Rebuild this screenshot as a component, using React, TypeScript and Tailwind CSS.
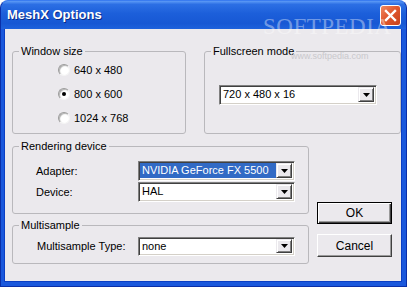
import React from 'react';

const FONT = "font-['Liberation_Sans',Arial,sans-serif]";

const DropArrow = () => (
  <div className="w-[16px] h-full flex items-center justify-center bg-[#ebe9ed] border border-t-[#ebe9ed] border-l-[#ebe9ed] border-r-[#404040] border-b-[#404040] shadow-[inset_1px_1px_0_#fff,inset_-1px_-1px_0_#808080]">
    <svg width="7" height="4" viewBox="0 0 7 4">
      <path d="M0 0h7L3.5 4z" fill="#000" />
    </svg>
  </div>
);

interface ComboProps {
  value: string;
  width: string;
  height: string;
  selected?: boolean;
}

const Combo: React.FC<ComboProps> = ({ value, width, height, selected }) => (
  <div
    className={`${width} ${height} flex bg-white border border-t-[#808080] border-l-[#808080] border-r-white border-b-white shadow-[inset_1px_1px_0_#404040,inset_-1px_-1px_0_#d4d0c8] p-[1px] pr-[2px] pb-[2px]`}
  >
    <div
      className={`flex-1 flex items-center pl-[2px] leading-none ${
        selected ? 'bg-[#316ac5] text-white' : 'text-black'
      }`}
    >
      {value}
    </div>
    <DropArrow />
  </div>
);

const Radio: React.FC<{ label: string; checked?: boolean }> = ({ label, checked }) => (
  <div className="h-[24px] flex items-center gap-[4px]">
    <span className="w-[12px] h-[12px] rounded-full bg-white border border-t-[#9a9a9a] border-l-[#9a9a9a] border-r-[#f4f4f4] border-b-[#f4f4f4] shadow-[inset_1px_1px_1px_#b0b0b0] flex items-center justify-center">
      {checked && <span className="w-[4px] h-[4px] rounded-full bg-black" />}
    </span>
    <span>{label}</span>
  </div>
);

const Group: React.FC<{ title: string; className: string; children?: React.ReactNode }> = ({
  title,
  className,
  children,
}) => (
  <div className={`relative border border-[#b9b8bc] rounded-[3px] ${className}`}>
    <span className="absolute -top-[7px] left-[6px] px-[2px] bg-[#ebe9ed] leading-[13px]">{title}</span>
    {children}
  </div>
);

export default function App() {
  return (
    <div className={`w-[407px] h-[287px] bg-white text-[11px] text-black ${FONT}`}>
      <div className="relative w-full h-full flex flex-col rounded-t-[8px] bg-[#1a58dc] border border-[#0a2fa8] border-t-[#3a7cf0] overflow-hidden">
        {/* title bar */}
        <div className="h-[28px] flex items-center justify-between pl-[6px] pr-[5px] bg-[linear-gradient(to_bottom,#5d9bf6_0%,#2c6fe4_12%,#1c5fda_45%,#1758d4_80%,#1e62dc_100%)]">
          <span className="text-white font-bold text-[13px] [text-shadow:1px_1px_0_#0b2a83]">MeshX Options</span>
          <div className="w-[21px] h-[21px] rounded-[3px] border border-white flex items-center justify-center bg-[linear-gradient(135deg,#f08a62_0%,#e0582f_45%,#c8421c_100%)]">
            <svg width="13" height="13" viewBox="0 0 13 13">
              <path d="M2 2l9 9M11 2l-9 9" stroke="#fff" strokeWidth="2.4" strokeLinecap="square" />
            </svg>
          </div>
        </div>

        {/* client area */}
        <div className="flex-1 ml-[3px] mr-[4px] mb-[4px] bg-[#ebe9ed] border border-[#0b3fc4] border-t-0 flex flex-col pt-[22px] pl-[7px]">
          <div className="flex gap-[18px]">
            <Group title="Window size" className="w-[174px] h-[83px]">
              <div className="pt-[6px] pl-[45px] flex flex-col">
                <Radio label="640 x 480" />
                <Radio label="800 x 600" checked />
                <Radio label="1024 x 768" />
              </div>
            </Group>
            <Group title="Fullscreen mode" className="w-[197px] h-[83px]">
              <div className="pt-[33px] pl-[14px]">
                <Combo value="720 x 480 x 16" width="w-[158px]" height="h-[20px]" />
              </div>
            </Group>
          </div>

          <div className="flex mt-[12px]">
            <div className="w-[297px] flex flex-col gap-[11px]">
              <Group title="Rendering device" className="h-[68px]">
                <div className="pt-[14px] pl-[23px] flex flex-col gap-[1px]">
                  <div className="flex items-center">
                    <span className="w-[102px]">Adapter:</span>
                    <Combo value="NVIDIA GeForce FX 5500" width="w-[157px]" height="h-[20px]" selected />
                  </div>
                  <div className="flex items-center">
                    <span className="w-[102px]">Device:</span>
                    <Combo value="HAL" width="w-[157px]" height="h-[20px]" />
                  </div>
                </div>
              </Group>
              <Group title="Multisample" className="h-[39px]">
                <div className="pt-[11px] pl-[24px] flex items-center">
                  <span className="w-[101px]">Multisample Type:</span>
                  <Combo value="none" width="w-[157px]" height="h-[19px]" />
                </div>
              </Group>
            </div>

            <div className="ml-[8px] flex flex-col pt-[56px] gap-[10px]">
              <button className="w-[75px] h-[22px] bg-[#ebe9ed] border border-black shadow-[inset_1px_1px_0_#fff,inset_-1px_-1px_0_#404040,inset_-2px_-2px_0_#9a9a9a] text-[12px] leading-none">
                OK
              </button>
              <button className="w-[75px] h-[23px] bg-[#ebe9ed] border border-t-white border-l-white border-r-[#404040] border-b-[#404040] shadow-[inset_-1px_-1px_0_#9a9a9a] text-[12px] leading-none">
                Cancel
              </button>
            </div>
          </div>
        </div>

        {/* watermark */}
        <span className="absolute left-[262px] top-[14px] font-['Liberation_Serif',serif] text-[23px] leading-none tracking-[0.5px] text-white/40 pointer-events-none">
          SOFTPEDIA
        </span>
        <span className="absolute left-[290px] top-[51px] text-[9px] leading-none text-[#c9c8cc] pointer-events-none">
          www.softpedia.com
        </span>
      </div>
    </div>
  );
}
